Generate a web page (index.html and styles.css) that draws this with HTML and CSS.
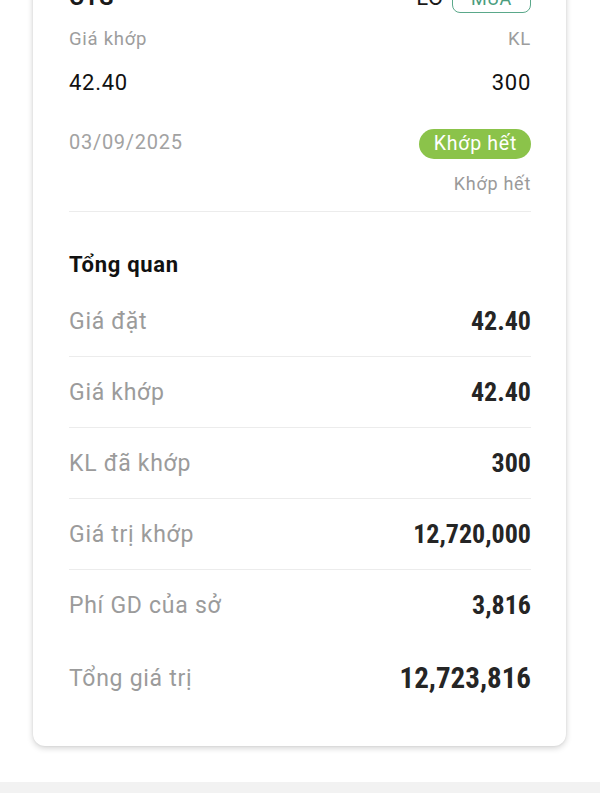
FILE: index.html
```html
<!DOCTYPE html>
<html lang="vi">
<head>
  <meta charset="UTF-8">
  <meta name="viewport" content="width=device-width, initial-scale=1.0">
  <title>Chi tiết lệnh - CTS</title>
  <link rel="stylesheet" href="styles.css">
</head>
<body>
  <div class="page">
    <div class="card">
      <div class="head">
        <span class="symbol">CTS</span>
        <div class="side">
          <span class="type">LO</span>
          <span class="buy">MUA</span>
        </div>
      </div>

      <div class="line labels">
        <span>Giá khớp</span>
        <span>KL</span>
      </div>
      <div class="line numbers">
        <span>42.40</span>
        <span>300</span>
      </div>

      <div class="status">
        <span class="date">03/09/2025</span>
        <div class="state">
          <span class="pill">Khớp hết</span>
          <span class="state-text">Khớp hết</span>
        </div>
      </div>

      <hr>

      <h3>Tổng quan</h3>
      <div class="rows" id="rows"></div>
    </div>
    <div class="bottom-bar"></div>
  </div>

  <script>
    const overview = [
      ["Giá đặt", "42.40"],
      ["Giá khớp", "42.40"],
      ["KL đã khớp", "300"],
      ["Giá trị khớp", "12,720,000"],
      ["Phí GD của sở", "3,816"],
      ["Tổng giá trị", "12,723,816"]
    ];

    const rows = document.getElementById("rows");
    overview.forEach(([label, value], i) => {
      const row = document.createElement("div");
      row.className = "row";
      if (i === overview.length - 1) row.classList.add("total");
      row.innerHTML = `<span class="label">${label}</span><span class="value">${value}</span>`;
      rows.appendChild(row);
    });
  </script>
</body>
</html>
```

FILE: styles.css
```css
body {
  margin: 0;
  font-family: Roboto, "Noto Sans", sans-serif;
  background: #fff;
  color: #1a1a1a;
  letter-spacing: 0.045em;
}
.page {
  display: flex;
  flex-direction: column;
  overflow: hidden;
  height: 800px;
}
.card {
  margin: -40px 34px 0 33px;
  padding: 21px 35px 30px 36px;
  background: #fff;
  border-radius: 12px;
  box-shadow: 0 2px 6px rgba(0, 0, 0, 0.18), 0 0 2px rgba(0, 0, 0, 0.08);
}
.head {
  display: flex;
  justify-content: space-between;
  align-items: center;
  height: 32px;
}
.symbol {
  font-weight: 700;
  font-size: 23px;
}
.side {
  display: flex;
  align-items: center;
  gap: 8px;
}
.type {
  font-size: 22px;
}
.buy {
  border: 1.5px solid #5aa88a;
  border-radius: 8px;
  color: #4b9d7e;
  font-size: 18px;
  padding: 1px 18px;
  line-height: 24px;
  margin-top: 3px;
}
.line {
  display: flex;
  justify-content: space-between;
}
.labels {
  margin-top: 14px;
  line-height: 24px;
  font-size: 18.5px;
  color: #9d9d9d;
}
.numbers {
  margin-top: 18px;
  line-height: 28px;
  font-size: 22px;
  color: #111;
}
.status {
  display: flex;
  justify-content: space-between;
  align-items: flex-start;
  margin-top: 32px;
}
.date {
  font-size: 20px;
  line-height: 26px;
  color: #a2a2a2;
}
.state {
  display: flex;
  flex-direction: column;
  align-items: flex-end;
}
.pill {
  background: #8bc34a;
  color: #fff;
  border-radius: 15px;
  height: 30px;
  line-height: 30px;
  padding: 0 14px 0 15px;
  font-size: 19.5px;
}
.state-text {
  margin-top: 14px;
  line-height: 22px;
  font-size: 18px;
  color: #9a9a9a;
}
hr {
  border: none;
  border-top: 1px solid #ececec;
  margin: 16px 0 0;
}
h3 {
  margin: 39px 0 0;
  font-size: 22px;
  line-height: 28px;
  font-weight: 700;
  color: #111;
}
.rows {
  margin-top: 7px;
}
.row {
  display: flex;
  justify-content: space-between;
  align-items: center;
  height: 70px;
  border-bottom: 1px solid #ececec;
}
.row:nth-child(5) {
  border-bottom: none;
}
.row.total {
  height: 76px;
  border-bottom: none;
}
.label {
  font-size: 23px;
  color: #9b9b9b;
}
.value {
  font-family: "Roboto Condensed", Roboto, sans-serif;
  font-weight: 700;
  font-size: 26px;
  letter-spacing: 0;
  color: #252525;
}
.total .value {
  font-size: 29px;
}
.bottom-bar {
  margin-top: 36px;
  height: 11px;
  background: #f2f2f2;
}
```
